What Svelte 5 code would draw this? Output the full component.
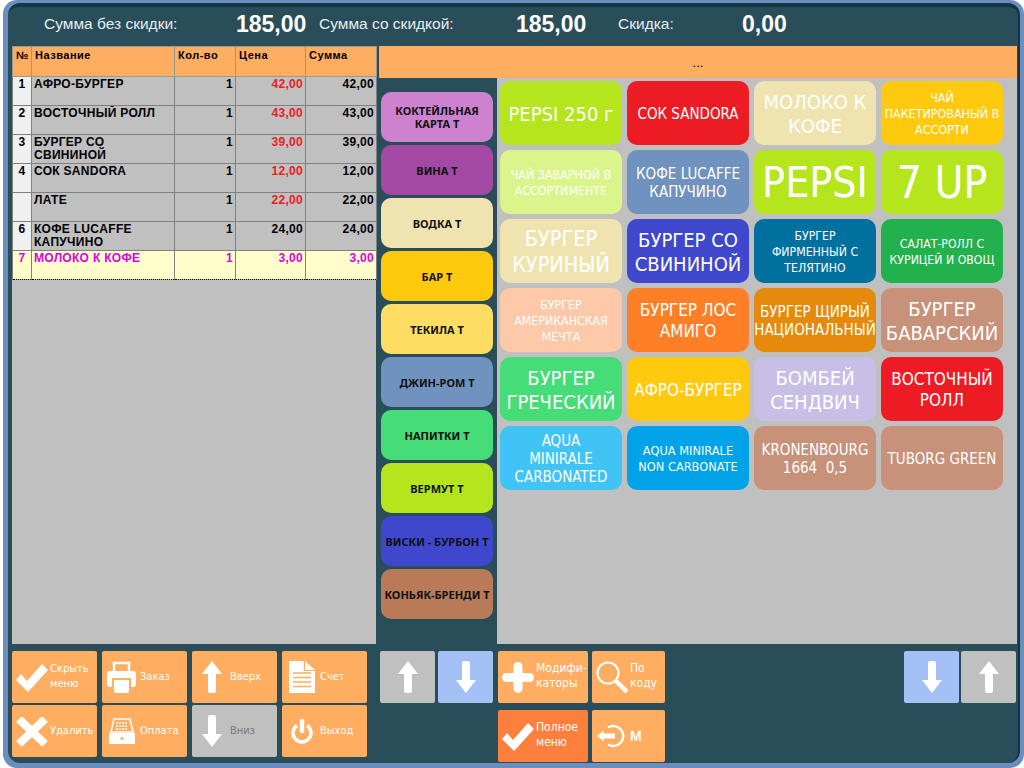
<script>
  const rows = [
    { n: '1', name: 'АФРО-БУРГЕР', qty: 1, price: '42,00', sum: '42,00', red: true },
    { n: '2', name: 'ВОСТОЧНЫЙ РОЛЛ', qty: 1, price: '43,00', sum: '43,00', red: true },
    { n: '3', name: 'БУРГЕР СО СВИНИНОЙ', qty: 1, price: '39,00', sum: '39,00', red: true },
    { n: '4', name: 'СОК SANDORA', qty: 1, price: '12,00', sum: '12,00', red: true },
    { n: '', name: 'ЛАТЕ', qty: 1, price: '22,00', sum: '22,00', red: true },
    { n: '6', name: 'КОФЕ LUCAFFE КАПУЧИНО', qty: 1, price: '24,00', sum: '24,00' },
    { n: '7', name: 'МОЛОКО К КОФЕ', qty: 1, price: '3,00', sum: '3,00', selected: true }
  ];

  const categories = [
    { name: 'КОКТЕЙЛЬНАЯ КАРТА Т', color: '#cc82cf' },
    { name: 'ВИНА Т', color: '#a349a4' },
    { name: 'ВОДКА Т', color: '#efe4b0' },
    { name: 'БАР Т', color: '#ffc90e' },
    { name: 'ТЕКИЛА Т', color: '#ffdd62' },
    { name: 'ДЖИН-РОМ Т', color: '#7092be' },
    { name: 'НАПИТКИ Т', color: '#46dc78' },
    { name: 'ВЕРМУТ Т', color: '#b5e61d' },
    { name: 'ВИСКИ - БУРБОН Т', color: '#3f48cc' },
    { name: 'КОНЬЯК-БРЕНДИ Т', color: '#b97a57' }
  ];

  // line breaks follow the reference, the names don't wrap the same way in these fonts
  const products = [
    { name: 'PEPSI 250 г', color: '#b5e61d', size: 20 },
    { name: 'СОК SANDORA', color: '#ed1c24', size: 15 },
    { name: 'МОЛОКО К\nКОФЕ', color: '#efe4b0', size: 20 },
    { name: 'ЧАЙ\nПАКЕТИРОВАНЫЙ В\nАССОРТИ', color: '#ffc90e', size: 12.4 },
    { name: 'ЧАЙ ЗАВАРНОЙ В\nАССОРТИМЕНТЕ', color: '#d9f58c', size: 12.4 },
    { name: 'КОФЕ LUCAFFE\nКАПУЧИНО', color: '#7092be', size: 15 },
    { name: 'PEPSI', color: '#b5e61d', size: 42.5 },
    { name: '7 UP', color: '#b5e61d', size: 44 },
    { name: 'БУРГЕР\nКУРИНЫЙ', color: '#efe4b0', size: 21.5 },
    { name: 'БУРГЕР СО\nСВИНИНОЙ', color: '#3f48cc', size: 20 },
    { name: 'БУРГЕР\nФИРМЕННЫЙ С\nТЕЛЯТИНО', color: '#00709f', size: 12.2 },
    { name: 'САЛАТ-РОЛЛ С\nКУРИЦЕЙ И ОВОЩ', color: '#22b14c', size: 12.2 },
    { name: 'БУРГЕР\nАМЕРИКАНСКАЯ\nМЕЧТА', color: '#fdc9a8', size: 12.3 },
    { name: 'БУРГЕР ЛОС\nАМИГО', color: '#ff7f27', size: 17 },
    { name: 'БУРГЕР ЩИРЫЙ\nНАЦИОНАЛЬНЫЙ', color: '#e58a0c', size: 15 },
    { name: 'БУРГЕР\nБАВАРСКИЙ', color: '#c8917a', size: 20 },
    { name: 'БУРГЕР\nГРЕЧЕСКИЙ', color: '#46dc78', size: 20 },
    { name: 'АФРО-БУРГЕР', color: '#ffc90e', size: 17 },
    { name: 'БОМБЕЙ\nСЕНДВИЧ', color: '#c8bfe7', size: 20 },
    { name: 'ВОСТОЧНЫЙ\nРОЛЛ', color: '#ed1c24', size: 17 },
    { name: 'AQUA\nMINIRALE\nCARBONATED', color: '#40c4f5', size: 15 },
    { name: 'AQUA MINIRALE\nNON CARBONATE', color: '#00a2e8', size: 12.7 },
    { name: 'KRONENBOURG\n1664  0,5', color: '#c8917a', size: 15 },
    { name: 'TUBORG GREEN', color: '#c8917a', size: 15 }
  ];

  const lineHeight = (size) => (size < 13 ? 16 : Math.round(size * 1.22));
</script>

{#snippet arrow(up)}
  <svg width="20" height="32" viewBox="0 0 20 32">
    {#if up}
      <path d="M10 0 L20 13 H14 V30 Q14 32 12 32 H8 Q6 32 6 30 V13 H0 Z" fill="#fff" />
    {:else}
      <path d="M10 32 L20 19 H14 V2 Q14 0 12 0 H8 Q6 0 6 2 V19 H0 Z" fill="#fff" />
    {/if}
  </svg>
{/snippet}

{#snippet check()}
  <svg width="32" height="29" viewBox="0 0 32 29">
    <path d="M0 17 L5 11 L11 18 L26 1 L32 7 L12 29 Z" fill="#fff" />
  </svg>
{/snippet}

<div class="frame">
  <div class="inner">
    <header class="totals">
      <span class="lbl">Сумма без скидки:</span>
      <b class="val">185,00</b>
      <span class="lbl">Сумма со скидкой:</span>
      <b class="val">185,00</b>
      <span class="lbl">Скидка:</span>
      <b class="val">0,00</b>
    </header>

    <div class="middle">
      <section class="order">
        <table>
          <colgroup>
            <col style="width:19px" /><col style="width:143px" /><col style="width:61px" /><col style="width:70px" /><col style="width:71px" />
          </colgroup>
          <thead>
            <tr>
              <th>№</th><th>Название</th><th>Кол-во</th><th>Цена</th><th>Сумма</th>
            </tr>
          </thead>
          <tbody>
            {#each rows as r}
              <tr class:selected={r.selected}>
                <td class="num">{r.n}</td>
                <td>{r.name}</td>
                <td class="right">{r.qty}</td>
                <td class="right" class:red={r.red}>{r.price}</td>
                <td class="right">{r.sum}</td>
              </tr>
            {/each}
          </tbody>
        </table>
      </section>

      <section class="menu">
        <div class="dots">...</div>
        <div class="menu-body">
          <div class="cats">
            {#each categories as c}
              <div class="cat" style="background:{c.color}">{c.name}</div>
            {/each}
          </div>
          <div class="products">
            {#each products as p}
              <div class="product" style="background:{p.color};font-size:{p.size}px;line-height:{lineHeight(p.size)}px">{p.name}</div>
            {/each}
          </div>
        </div>
      </section>
    </div>

    <footer class="bottom">
      <div class="actions">
        <button><i>{@render check()}</i><span>Скрыть меню</span></button>
        <button>
          <i>
            <svg width="29" height="32" viewBox="0 0 29 32">
              <path d="M7 11 V2 H22 V11" fill="none" stroke="#fff" stroke-width="2.5" />
              <rect y="10" width="29" height="16" rx="3" fill="#fff" />
              <rect x="5" y="17" width="19" height="15" fill="#ffad60" />
              <path d="M7 19 H22 V30 Q22 32 20 32 H9 Q7 32 7 30 Z" fill="#fff" />
            </svg>
          </i>
          <span>Заказ</span>
        </button>
        <button><i>{@render arrow(true)}</i><span>Вверх</span></button>
        <button>
          <i>
            <svg width="26" height="32" viewBox="0 0 26 32">
              <path d="M0 0 H16 L26 9 V32 H0 Z" fill="#fff" />
              <path d="M15.5 0 V9.5 H26" fill="none" stroke="#ffad60" stroke-width="1.2" />
              <path d="M4 12 H22 M4 16.5 H22 M4 21 H22 M4 25.5 H22" stroke="#ffad60" stroke-width="1.5" />
            </svg>
          </i>
          <span>Счет</span>
        </button>
        <button>
          <i>
            <svg width="32" height="29" viewBox="0 0 32 29">
              <path d="M3 2 L29 27 M29 2 L3 27" stroke="#fff" stroke-width="8" />
            </svg>
          </i>
          <span>Удалить</span>
        </button>
        <button>
          <i>
            <svg width="28" height="27" viewBox="0 0 28 27">
              <path d="M6 1 H22 L25 14 H3 Z" fill="none" stroke="#fff" stroke-width="1.5" />
              <path d="M8 5 H20 M8 8 H20 M8 11 H20" stroke="#fff" stroke-width="1.5" stroke-dasharray="2 1" />
              <path d="M1 15 H27 V26 H1 Z" fill="#fff" />
              <circle cx="14" cy="20.5" r="1.6" fill="#ffad60" />
            </svg>
          </i>
          <span>Оплата</span>
        </button>
        <button class="off"><i>{@render arrow(false)}</i><span>Вниз</span></button>
        <button>
          <i>
            <svg width="22" height="25" viewBox="0 0 22 25">
              <path d="M6 6.5 A9 9 0 1 0 16 6.5" fill="none" stroke="#fff" stroke-width="3.5" />
              <path d="M11 2 V12" stroke="#fff" stroke-width="4.5" stroke-linecap="round" />
            </svg>
          </i>
          <span>Выход</span>
        </button>
      </div>

      <div class="arrows">
        <button class="off square">{@render arrow(true)}</button>
        <button class="blue square">{@render arrow(false)}</button>
      </div>

      <div class="tools">
        <button class="big">
          <i>
            <svg width="32" height="31" viewBox="0 0 32 31">
              <path d="M16 4.5 V26.5 M4.5 15.5 H27.5" stroke="#fff" stroke-width="9" stroke-linecap="round" />
            </svg>
          </i>
          <span>Модифи-<br />каторы</span>
        </button>
        <button class="big">
          <i>
            <svg width="32" height="32" viewBox="0 0 32 32">
              <circle cx="12" cy="12" r="10.5" fill="none" stroke="#fff" stroke-width="2.2" />
              <path d="M20 20 L31 31" stroke="#fff" stroke-width="4.5" />
            </svg>
          </i>
          <span>По<br />коду</span>
        </button>
        <button class="hot big">
          <i>{@render check()}</i>
          <span>Полное<br />меню</span>
        </button>
        <button class="big">
          <i>
            <svg width="29" height="24" viewBox="0 0 29 24">
              <path d="M11 3.5 A10 10 0 1 1 11 20.5" fill="none" stroke="#fff" stroke-width="2.5" />
              <path d="M0 12 L7 6.5 V9.5 H18 V14.5 H7 V17.5 Z" fill="#fff" />
            </svg>
          </i>
          <b class="m">М</b>
        </button>
      </div>

      <div class="arrows end">
        <button class="blue square">{@render arrow(false)}</button>
        <button class="off square">{@render arrow(true)}</button>
      </div>
    </footer>
  </div>
</div>

<style>
  :global(body) {
    background: #fff;
  }
  .frame {
    width: 1021px;
    height: 768px;
    margin-left: 3px;
    box-sizing: border-box;
    background: #6c8ebf;
    border-radius: 14px;
    padding: 3px 4px 5px 5px;
    font-family: "Liberation Sans", Arial, sans-serif;
    overflow: hidden;
  }
  .inner {
    height: 100%;
    background: #2a4d5a;
    border-radius: 12px;
    border-top: 4px solid #123642;
    border-right: 2px solid #123642;
    box-sizing: border-box;
    display: flex;
    flex-direction: column;
    padding-left: 4px;
  }
  .totals {
    height: 39px;
    box-sizing: border-box;
    padding: 0 0 5px 32px;
    display: grid;
    grid-template-columns: 192px 83px 197px 102px 124px auto;
    align-items: center;
    color: #fff;
    flex: none;
  }
  .lbl {
    font-size: 15.5px;
    color: #e6eef2;
  }
  .val {
    font-size: 23px;
  }
  .middle {
    height: 598px;
    display: flex;
    flex: none;
  }
  .order {
    width: 364px;
    background: #c0c0c0;
    flex: none;
  }
  table {
    border-collapse: collapse;
    table-layout: fixed;
    width: 364px;
    font: bold 12px "Liberation Sans", Arial, sans-serif;
    letter-spacing: 0.3px;
    color: #000;
  }
  th {
    background: #ffad60;
    height: 30px;
    box-sizing: border-box;
    text-align: left;
    vertical-align: top;
    padding: 2px 3px;
    border: 1px solid #9a9a8a;
    font-size: 11px;
    letter-spacing: 0.5px;
  }
  td {
    height: 29px;
    box-sizing: border-box;
    vertical-align: top;
    padding: 1px 2px 0 2px;
    border: 1px solid #808080;
    line-height: 13px;
    overflow: hidden;
  }
  td.num {
    background: #f0f0f0;
    text-align: center;
  }
  .right {
    text-align: right;
  }
  .red {
    color: #ed1c24;
  }
  tr.selected td {
    background: #ffffcc;
    color: #e000e0;
    border-top: 1px dotted #000;
    border-bottom: 1px dotted #000;
  }
  .menu {
    flex: 1;
    display: flex;
    flex-direction: column;
    min-width: 0;
    margin-right: 1px;
  }
  .dots {
    height: 32px;
    margin-left: 3px;
    background: #ffad60;
    text-align: center;
    font-size: 13px;
    line-height: 33px;
    flex: none;
  }
  .menu-body {
    flex: 1;
    display: flex;
  }
  .cats {
    width: 121px;
    padding: 14px 4px 0 5px;
    box-sizing: border-box;
    display: flex;
    flex-direction: column;
    gap: 3px;
    flex: none;
  }
  .cat {
    height: 50px;
    border-radius: 10px;
    display: flex;
    align-items: center;
    justify-content: center;
    text-align: center;
    font: bold 11px/13px "Noto Sans", sans-serif;
    color: #111;
    padding: 0 2px;
  }
  .products {
    flex: 1;
    background: #c0c0c0;
    padding: 3px;
    display: grid;
    grid-template-columns: repeat(4, 122px);
    grid-auto-rows: 64px;
    gap: 5px;
    align-content: start;
  }
  .product {
    box-sizing: border-box;
    padding-top: 2px;
    border-radius: 10px;
    color: #fff;
    display: flex;
    align-items: center;
    justify-content: center;
    text-align: center;
    white-space: pre-wrap;
    font-family: "DejaVu Sans", sans-serif;
    font-stretch: condensed;
    overflow: hidden;
  }
  .bottom {
    flex: 1;
    display: flex;
    padding-top: 7px;
    align-items: flex-start;
  }
  button {
    border: 0;
    padding: 0;
    border-radius: 2px;
    background: #ffad60;
    color: #fff;
    display: grid;
    grid-template-columns: 38px 1fr;
    align-items: center;
    font: 11px/15px "DejaVu Sans", sans-serif;
    font-stretch: condensed;
    text-align: left;
    height: 52px;
  }
  button i {
    display: flex;
    justify-content: center;
    padding-left: 1px;
  }
  button span {
    padding-bottom: 2px;
  }
  button svg {
    display: block;
  }
  .big {
    font-size: 12px;
  }
  .actions {
    width: 365px;
    display: grid;
    grid-template-columns: repeat(4, 85px);
    grid-auto-rows: 52px;
    gap: 2px 5px;
    flex: none;
  }
  .off {
    background: #c0c0c0;
    color: #777;
  }
  .blue {
    background: #a4c0f4;
  }
  .square {
    width: 55px;
    display: flex;
    justify-content: center;
  }
  .arrows {
    width: 113px;
    margin-left: 3px;
    display: flex;
    gap: 3px;
    flex: none;
  }
  .arrows.end {
    margin-left: auto;
    margin-right: 1px;
    gap: 2px;
  }
  .tools {
    margin-left: 5px;
    display: grid;
    grid-template-columns: 90px 73px;
    grid-auto-rows: 52px;
    gap: 7px 4px;
    flex: none;
  }
  .hot {
    background: #ff7f3c;
  }
  .m {
    font: bold 14px "Liberation Sans", sans-serif;
  }
</style>
